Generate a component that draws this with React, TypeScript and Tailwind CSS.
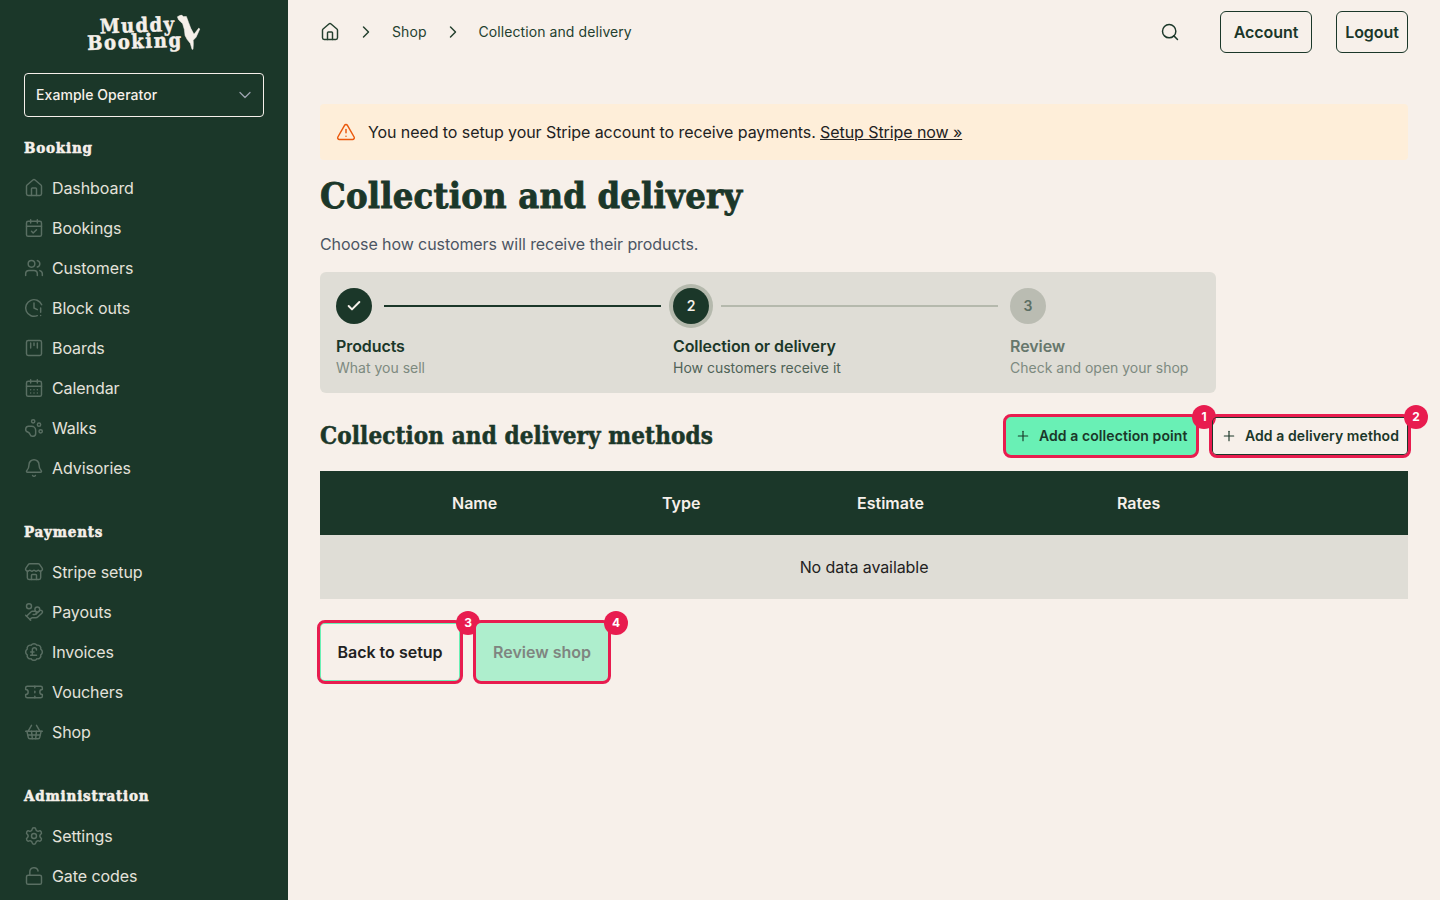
import type { ReactNode } from "react";
import {
  BadgePoundSterling,
  Bell,
  CalendarCheck,
  CalendarDays,
  Check,
  ChevronDown,
  ChevronRight,
  ClockAlert,
  HandCoins,
  House,
  LockOpen,
  PawPrint,
  Plus,
  Search,
  Settings,
  ShoppingBasket,
  Store,
  Ticket,
  TriangleAlert,
  Users,
  type LucideIcon,
} from "lucide-react";

const serif = "font-['DejaVu_Serif_Condensed','DejaVu_Serif',serif] font-bold";

const BoardsIcon = ({ className }: { className?: string }) => (
  <svg
    viewBox="0 0 24 24"
    fill="none"
    stroke="currentColor"
    strokeWidth={1.75}
    strokeLinecap="round"
    strokeLinejoin="round"
    className={className}
  >
    <rect x="3" y="3" width="18" height="18" rx="2" />
    <path d="M8 6v6M12 6v3M16 6v6" />
  </svg>
);

type NavItem = { label: string; icon: LucideIcon | typeof BoardsIcon };

const sections: { title: string; items: NavItem[] }[] = [
  {
    title: "Booking",
    items: [
      { label: "Dashboard", icon: House },
      { label: "Bookings", icon: CalendarCheck },
      { label: "Customers", icon: Users },
      { label: "Block outs", icon: ClockAlert },
      { label: "Boards", icon: BoardsIcon },
      { label: "Calendar", icon: CalendarDays },
      { label: "Walks", icon: PawPrint },
      { label: "Advisories", icon: Bell },
    ],
  },
  {
    title: "Payments",
    items: [
      { label: "Stripe setup", icon: Store },
      { label: "Payouts", icon: HandCoins },
      { label: "Invoices", icon: BadgePoundSterling },
      { label: "Vouchers", icon: Ticket },
      { label: "Shop", icon: ShoppingBasket },
    ],
  },
  {
    title: "Administration",
    items: [
      { label: "Settings", icon: Settings },
      { label: "Gate codes", icon: LockOpen },
    ],
  },
];

const Logo = () => (
  <div className="flex h-[73px] items-start justify-center pt-[17px]">
    <div className="relative h-[36px] w-[114px] -rotate-2 text-[#f6f0ea] [-webkit-text-stroke:0.5px_currentColor]">
      <div className={`${serif} pl-[13px] text-[20px] leading-[16px] tracking-[1.4px]`}>Muddy</div>
      <div className={`${serif} text-[20px] leading-[16px] tracking-[1.6px]`}>Booking</div>
      <svg
        viewBox="0 0 25 36"
        className="absolute top-[-1px] left-[89px] h-[36px] w-[25px]"
        fill="currentColor"
        stroke="currentColor"
        strokeWidth={0.5}
        strokeLinejoin="round"
      >
        <path d="M2 2 L6 0 L8 2 L11 2 L13 8 L15 14 L18 20 L23 14 L24 15 L20 23 L17 26 L17 30 L16.5 35 L15.5 35 L14 29 L11 25 L9 21 L8.5 15 L7 9 L5 7 L3 5 Z" />
      </svg>
    </div>
  </div>
);

const Sidebar = () => (
  <aside className="h-[900px] w-[288px] shrink-0 overflow-hidden bg-[#1b3729] px-6">
    <Logo />
    <div className="mb-[11px] flex h-11 items-center justify-between rounded border border-[#f6f0ea] pr-2 pl-[11px] text-sm font-medium tracking-[0.07px] text-[#f6f0ea]">
      Example Operator
      <ChevronDown className="h-5 w-5 text-[#9ca3af]" strokeWidth={1.5} />
    </div>
    {sections.map((section) => (
      <div key={section.title} className="mb-6">
        <div
          className={`${serif} flex h-10 items-center text-[15px] tracking-[0.8px] text-[#f6f0ea] [-webkit-text-stroke:0.5px_currentColor]`}
        >
          {section.title}
        </div>
        {section.items.map((item) => (
          <div key={item.label} className="flex h-10 items-center gap-2 text-base text-[#e4e2db]">
            <item.icon className="h-5 w-5 shrink-0 text-[#5a6f63]" strokeWidth={1.75} />
            {item.label}
          </div>
        ))}
      </div>
    ))}
  </aside>
);

const Highlight = ({ n, children }: { n: number; children: ReactNode }) => (
  <div className="relative rounded-[5px] outline-3 outline-[#e81c4f]">
    {children}
    <span className="absolute top-[-12px] right-[-20px] flex h-6 w-6 items-center justify-center rounded-full bg-[#e81c4f] text-xs font-bold text-white">
      {n}
    </span>
  </div>
);

const steps = [
  { label: "Products", hint: "What you sell" },
  { label: "Collection or delivery", hint: "How customers receive it" },
  { label: "Review", hint: "Check and open your shop" },
];

const Stepper = () => (
  <div className="mt-4 flex w-[896px] rounded-md bg-[#dfddd6] px-4 pt-4 pb-[15px]">
    {steps.map((step, i) => (
      <div key={step.label} className={i === 2 ? "w-[190px]" : "w-[337px]"}>
        <div className="flex h-9 items-center">
          <div
            className={`flex h-9 w-9 shrink-0 items-center justify-center rounded-full text-sm font-semibold ${
              i === 2 ? "bg-[#babcb2] text-[#5c6f64]" : "bg-[#1b3729] text-[#f6f0ea]"
            } ${i === 1 ? "ring-4 ring-[#b5b9ad]" : ""}`}
          >
            {i === 0 ? <Check className="h-4 w-4" strokeWidth={3} /> : i + 1}
          </div>
          {i < 2 && (
            <div className={`mx-3 h-0.5 flex-1 ${i === 0 ? "bg-[#1b3729]" : "bg-[#b5b9ad]"}`} />
          )}
        </div>
        <div className={`mt-2.5 text-base leading-6 font-semibold ${i === 2 ? "text-[#66776c]" : "text-[#1b3729]"}`}>
          {step.label}
        </div>
        <div className={`text-sm leading-5 tracking-normal ${i === 1 ? "text-[#4f6357]" : "text-[#7d8a80]"}`}>
          {step.hint}
        </div>
      </div>
    ))}
  </div>
);

export default function App() {
  return (
    <div className="flex h-[900px] overflow-hidden bg-[#f7f0ea] font-['Inter',sans-serif] tracking-[-0.08px]">
      <Sidebar />
      <main className="flex-1 px-8">
        <header className="flex h-16 items-center text-[#1b3729]">
          <nav className="flex items-center gap-4 text-sm tracking-[0.08px] text-[#24402f]">
            <House className="h-5 w-5" strokeWidth={1.75} />
            <ChevronRight className="h-5 w-5" strokeWidth={1.75} />
            <span>Shop</span>
            <ChevronRight className="h-5 w-5" strokeWidth={1.75} />
            <span>Collection and delivery</span>
          </nav>
          <Search className="mr-10 ml-auto h-5 w-5" strokeWidth={1.75} />
          <button className="h-[42px] w-[92px] rounded-md border border-[#1b3729] font-semibold">Account</button>
          <button className="ml-6 h-[42px] w-[72px] rounded-md border border-[#1b3729] font-semibold">Logout</button>
        </header>

        <div className="mt-10 flex h-14 items-center gap-3 rounded bg-[#feeed9] px-4 text-[#222]">
          <TriangleAlert className="h-5 w-5 text-[#ea580c]" strokeWidth={1.75} />
          <p>
            You need to setup your Stripe account to receive payments.{" "}
            <a className="underline">Setup Stripe now »</a>
          </p>
        </div>

        <h1
          className={`${serif} flex h-[72px] items-center pb-0.5 text-[36px] tracking-[0.2px] text-[#1b3729] [-webkit-text-stroke:0.8px_currentColor]`}
        >
          Collection and delivery
        </h1>
        <p className="leading-6 text-[#4b5563]">Choose how customers will receive their products.</p>

        <Stepper />

        <div className="mt-6 flex h-[38px] items-center">
          <h2
            className={`${serif} text-[24px] tracking-[0.1px] text-[#1b3729] [-webkit-text-stroke:0.5px_currentColor]`}
          >
            Collection and delivery methods
          </h2>
          <div className="ml-auto flex gap-4">
            <Highlight n={1}>
              <button className="flex h-[38px] w-[190px] items-center gap-2 rounded bg-[#69f0b5] pl-[9px] text-sm font-semibold tracking-[0.08px] text-[#1b3729]">
                <Plus className="h-4 w-4" strokeWidth={1.75} />
                Add a collection point
              </button>
            </Highlight>
            <Highlight n={2}>
              <button className="flex h-[38px] w-[196px] items-center gap-2 rounded border border-[#1b3729] pl-2 text-sm font-semibold tracking-[0.08px] text-[#1b3729]">
                <Plus className="h-4 w-4" strokeWidth={1.75} />
                Add a delivery method
              </button>
            </Highlight>
          </div>
        </div>

        <div className="mt-4">
          <div className="grid h-16 grid-cols-[210px_195px_260px_1fr] items-center bg-[#1b3729] pl-[132px] font-semibold tracking-normal text-[#f6f0ea]">
            <div>Name</div>
            <div>Type</div>
            <div>Estimate</div>
            <div>Rates</div>
          </div>
          <div className="flex h-16 items-center justify-center bg-[#dfddd6] text-[#222]">No data available</div>
        </div>

        <div className="mt-6 flex gap-4">
          <Highlight n={3}>
            <button className="h-[58px] w-[140px] rounded border border-[#69f0b5] font-semibold tracking-normal text-[#222]">Back to setup</button>
          </Highlight>
          <Highlight n={4}>
            <button className="h-[58px] w-[132px] rounded bg-[#aeeecd] font-semibold tracking-normal text-[#7f8580]">Review shop</button>
          </Highlight>
        </div>
      </main>
    </div>
  );
}
